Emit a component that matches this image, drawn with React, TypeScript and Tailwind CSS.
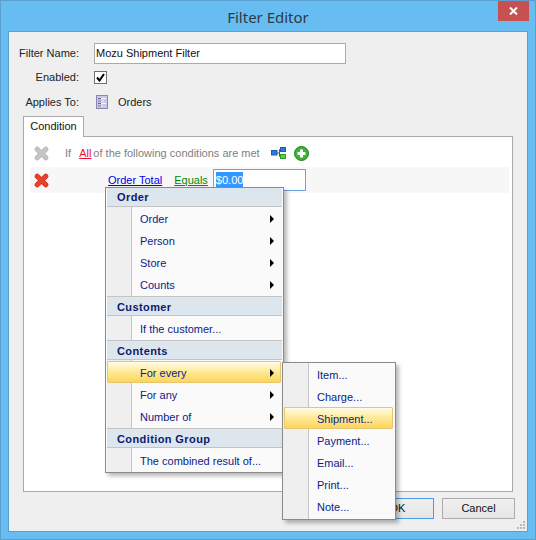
import React from "react";

function Cross({ c, d }: { c: string; d: string }) {
  return (
    <svg width="15" height="15" viewBox="0 0 15 15" className="shrink-0">
      <path d="M3.2 3.2 L11.8 11.8 M11.8 3.2 L3.2 11.8" stroke={d} strokeWidth="5" strokeLinecap="round" />
      <path d="M3.2 3.2 L11.8 11.8 M11.8 3.2 L3.2 11.8" stroke={c} strokeWidth="3.4" strokeLinecap="round" />
    </svg>
  );
}

function Item({ label, arrow, hot }: { label: string; arrow?: boolean; hot?: boolean }) {
  return (
    <div className="relative h-[22px] flex items-center pl-[33px] pr-[8px]">
      {hot && (
        <div className="absolute left-0 right-[1px] top-[-1px] h-[22px] rounded-[1px] border border-[#e6c670] bg-gradient-to-b from-[#fffbe6] via-[#fee995] to-[#fdd456]" />
      )}
      <span className="relative flex-1">{label}</span>
      {arrow && <span className="relative w-0 h-0 border-y-[4px] border-y-transparent border-l-[4px] border-l-black" />}
    </div>
  );
}

function Section({ title, first, items }: { title: string; first?: boolean; items: { label: string; arrow?: boolean; hot?: boolean }[] }) {
  return (
    <div>
      <div className={`bg-[#dde6ed] flex items-center pl-[10px] font-bold tracking-[0.4px] text-[#0a1a6e] border-b border-[#c4c4c4] box-content ${first ? "h-[18px]" : "h-[16px] pt-[2px] border-t"}`}>
        {title}
      </div>
      <div className={first ? "pt-[1px]" : "pt-[2px]"}>
        {items.map((i) => (
          <Item key={i.label} {...i} />
        ))}
      </div>
    </div>
  );
}

export default function App() {
  return (
    <div className="relative w-[536px] h-[540px] overflow-hidden bg-[#67bdf1] border border-[#5b9fcf] pt-[30px] px-[7px] pb-[7px] text-[11px] text-[#1c1c1c] [font-family:'Liberation_Sans',sans-serif]">
      <div className="absolute top-[5px] left-0 right-0 text-center text-[15px] text-[#2c3a48] [font-family:'Noto_Sans',sans-serif]">Filter Editor</div>
      <div className="absolute top-0 right-[6px] w-[31px] h-[20px] bg-[#c75050] flex items-center justify-center">
        <svg width="9" height="8" viewBox="0 0 9 8">
          <path d="M1 0.5 L8 7.5 M8 0.5 L1 7.5" stroke="#fff" strokeWidth="2" />
        </svg>
      </div>

      <div className="relative h-full bg-[#efefef] border border-[#5e9fca] pt-[11px] px-[14px]">
        <div className="flex items-center h-[21px]">
          <span className="w-[56px] flex justify-end text-[#222] whitespace-nowrap">Filter Name:</span>
          <div className="ml-[15px] w-[252px] h-[21px] bg-white border border-[#ababab] flex items-center pl-[1px] text-[#111]">Mozu Shipment Filter</div>
        </div>
        <div className="flex items-center h-[13px] mt-[7px]">
          <span className="w-[56px] flex justify-end text-[#222]">Enabled:</span>
          <div className="ml-[15px] w-[13px] h-[13px] bg-white border border-[#707070] flex items-center justify-center">
            <svg width="9" height="9" viewBox="0 0 9 9"><path d="M1 4.5 L3.5 7.5 L8 1" stroke="#000" strokeWidth="2" fill="none" /></svg>
          </div>
        </div>
        <div className="flex items-center h-[14px] mt-[11px]">
          <span className="w-[56px] flex justify-end text-[#222] whitespace-nowrap">Applies To:</span>
          <svg className="ml-[17px]" width="12" height="14" viewBox="0 0 12 14">
            <rect x="0.5" y="0.5" width="11" height="13" fill="#c8c8e4" stroke="#8a86b8" />
            <path d="M2 3.5H10M2 6H8M2 8.5H10M2 11H7" stroke="#f4f4fa" />
            <path d="M2 3.5H5M2 6H5M2 8.5H5M2 11H5" stroke="#62648c" />
          </svg>
          <span className="ml-[10px] text-[#222]">Orders</span>
        </div>

        <div className="mt-[7px] relative z-10 w-[61px] h-[21px] bg-white border border-b-0 border-[#a9a9a9] flex items-center justify-center pb-[1px] text-[#111]">Condition</div>
        <div className="-mt-[1px] h-[356px] bg-white border border-[#a9a9a9] pt-[6px] pl-[6px] pr-[3px]">
          <div className="flex items-center h-[20px] pl-[4px]">
            <Cross c="#c6c6c6" d="#b4b4b4" />
            <span className="ml-[16px] text-[#808080]">If</span>
            <span className="ml-[8px] text-[#e8102a] underline">All</span>
            <span className="ml-[2px] text-[#808080]">of the following conditions are met</span>
            <svg className="ml-[11px]" width="15" height="12" viewBox="0 0 15 12">
              <path d="M6 6H8.5M8.5 2.5V9.5M8.5 2.5H10M8.5 9.5H10" stroke="#555" fill="none" />
              <rect x="0.5" y="3.5" width="5.5" height="4.5" fill="#2a7ae0" stroke="#1d5cb0" />
              <rect x="9.5" y="0.5" width="5" height="4" fill="#2a7ae0" stroke="#1d5cb0" />
              <rect x="9.5" y="7.5" width="5" height="4" fill="#5ed04a" stroke="#2f9a28" />
            </svg>
            <svg className="ml-[8px]" width="15" height="15" viewBox="0 0 15 15">
              <circle cx="7.5" cy="7.5" r="7" fill="#39b52f" stroke="#1f7f1c" />
              <path d="M7.5 3.5V11.5M3.5 7.5H11.5" stroke="#fff" strokeWidth="3" />
            </svg>
          </div>
          <div className="mt-[4px] flex items-center h-[26px] bg-[#f7f7f7] pl-[4px]">
            <Cross c="#e8422a" d="#d2301c" />
            <span className="ml-[59px] text-[#0000e8] underline">Order Total</span>
            <span className="ml-[12px] text-[#008a00] underline">Equals</span>
            <div className="ml-[5px] w-[93px] h-[22px] bg-white border border-[#6ea4dc] flex items-center pl-[2px]">
              <span className="bg-[#3399ff] text-white">$0.00</span>
            </div>
          </div>
        </div>

        <div className="mt-[6px] flex justify-end gap-[8px] -mr-[2px]">
          <div className="w-[73px] h-[21px] border border-[#4d9be8] bg-gradient-to-b from-[#f0f0f0] to-[#e5e5e5] flex items-center justify-center text-[#111]">OK</div>
          <div className="w-[73px] h-[21px] border border-[#acacac] bg-gradient-to-b from-[#f0f0f0] to-[#e5e5e5] flex items-center justify-center text-[#111]">Cancel</div>
        </div>
        <svg className="absolute right-[1px] bottom-[1px]" width="9" height="9" viewBox="0 0 9 9" fill="#b8b8b8">
          <rect x="6" y="0" width="2" height="2" /><rect x="3" y="3" width="2" height="2" /><rect x="6" y="3" width="2" height="2" />
          <rect x="0" y="6" width="2" height="2" /><rect x="3" y="6" width="2" height="2" /><rect x="6" y="6" width="2" height="2" />
        </svg>
      </div>

      {/* Context menu */}
      <div className="absolute left-[104px] top-[186px] z-20 w-[179px] h-[286px] bg-[#fafafa] border border-[#8a8a8a] px-[1px] text-[#0c1c88] shadow-[3px_3px_4px_rgba(0,0,0,0.28)]">
        <div className="absolute left-[1px] top-0 bottom-0 w-[25px] bg-[#efefef] border-r border-[#c6c6c6]" />
        <div className="relative">
          <Section title="Order" first items={[{ label: "Order", arrow: true }, { label: "Person", arrow: true }, { label: "Store", arrow: true }, { label: "Counts", arrow: true }]} />
          <Section title="Customer" items={[{ label: "If the customer..." }]} />
          <Section title="Contents" items={[{ label: "For every", arrow: true, hot: true }, { label: "For any", arrow: true }, { label: "Number of", arrow: true }]} />
          <Section title="Condition Group" items={[{ label: "The combined result of..." }]} />
        </div>
      </div>

      {/* Submenu */}
      <div className="absolute left-[281px] top-[361px] z-30 w-[114px] h-[158px] bg-[#fafafa] border border-[#8a8a8a] px-[1px] pt-[1px] text-[#0c1c88] shadow-[3px_3px_4px_rgba(0,0,0,0.28)]">
        <div className="absolute left-0 top-0 bottom-0 w-[26px] bg-[#efefef] border-r border-[#c6c6c6]" />
        <div className="relative">
          {["Item...", "Charge...", "Shipment...", "Payment...", "Email...", "Print...", "Note..."].map((l) => (
            <Item key={l} label={l} hot={l === "Shipment..."} />
          ))}
        </div>
      </div>
    </div>
  );
}
